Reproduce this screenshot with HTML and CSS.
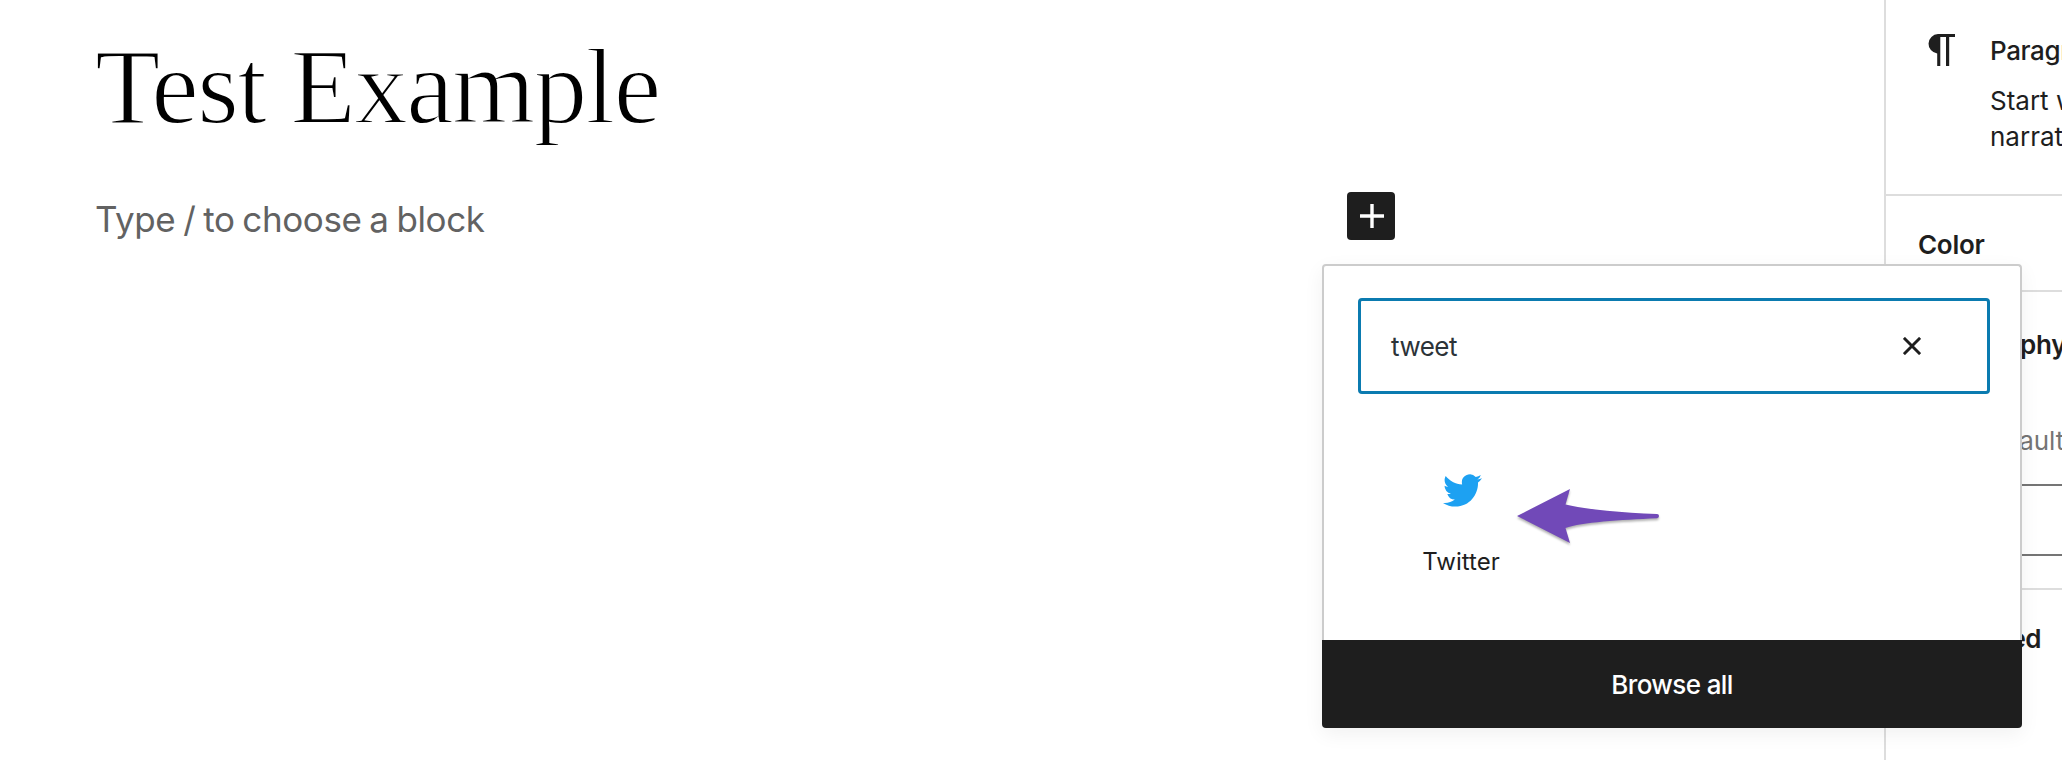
FILE: index.html
```html
<!DOCTYPE html>
<html lang="en">
<head>
<meta charset="utf-8">
<title>Test Example</title>
<link rel="stylesheet" href="styles.css">
</head>
<body>
<div class="app">
  <main class="editor">
    <h1 class="title">Test Example</h1>
    <p class="prompt">Type / to choose a block</p>
    <button class="add" aria-label="Add block"><svg width="24" height="24" viewBox="0 0 24 24"><path d="M0 12H24M12 0V24" stroke="#fff" stroke-width="3.4"/></svg></button>
  </main>
  <aside class="sidebar">
    <section class="card">
      <svg class="pilcrow" width="27" height="32" viewBox="0 0 27 32"><path d="M27 0H10A10 9.8 0 0 0 9.2 19.5V32H12.3V3H18V32H21.2V3H27Z" fill="#1e1e1e"/></svg>
      <div class="info">
        <h2 class="name">Paragraph</h2>
        <p class="desc">Start with the building block of all<br>narrative.</p>
      </div>
    </section>
    <section class="panel"><h3 class="heading">Color</h3></section>
    <section class="panel typography">
      <h3 class="heading">Typography</h3>
      <div class="size">Default</div>
      <div class="select"></div>
    </section>
    <section class="panel last"><h3 class="heading">Advanced</h3></section>
  </aside>
  <div class="popover">
    <div class="content">
      <div class="search">
        <span class="query">tweet</span>
        <svg width="18" height="18" viewBox="0 0 18 18"><path d="M.9 .9L17.1 17.1M17.1 .9L.9 17.1" stroke="#1e1e1e" stroke-width="2.9"/></svg>
      </div>
      <div class="results">
        <div class="item">
          <svg class="bird" width="39" height="33" viewBox="0 2 24 20" preserveAspectRatio="none"><path fill="#1da1f2" d="M23.953 4.57a10 10 0 01-2.825.775 4.958 4.958 0 002.163-2.723c-.951.555-2.005.959-3.127 1.184a4.92 4.92 0 00-8.384 4.482C7.69 8.095 4.067 6.13 1.64 3.162a4.822 4.822 0 00-.666 2.475c0 1.71.87 3.213 2.188 4.096a4.904 4.904 0 01-2.228-.616v.06a4.923 4.923 0 003.946 4.827 4.996 4.996 0 01-2.212.085 4.936 4.936 0 004.604 3.417 9.867 9.867 0 01-6.102 2.105c-.39 0-.779-.023-1.17-.067a13.995 13.995 0 007.557 2.209c9.053 0 13.998-7.496 13.998-13.985 0-.21 0-.42-.015-.63A9.935 9.935 0 0024 4.59z"/></svg>
          <span class="label">Twitter</span>
        </div>
        <svg class="arrow" width="142" height="54" viewBox="0 0 142 54"><path d="M0 27L53 0 48.5 15.5C72 21 105 23.5 140 25Q142 25 142 27Q142 29 140 29.2C103 31 65 33 48.500 39L53 54Z" fill="#7149b8"/></svg>
      </div>
    </div>
    <button class="browse">Browse all</button>
  </div>
</div>
</body>
</html>
```

FILE: styles.css
```css
* { box-sizing: border-box; }
body { margin: 0; background: #fff; color: #1e1e1e; font-family: Inter, sans-serif; font-size: 26px; }
h1, h2, h3, p { margin: 0; font-weight: 400; }
button { border: 0; padding: 0; font: inherit; }
svg { display: block; flex: none; }
.app { position: relative; display: flex; width: 2062px; height: 760px; overflow: hidden; }
.editor { position: relative; width: 1884px; flex: none; padding: 26px 0 0 95px; }
.title { font: 400 107px/122px "Liberation Serif", serif; letter-spacing: -1.6px; color: #000; -webkit-text-stroke: 1.9px #fff; }
.prompt { margin-top: 46px; font-size: 35px; line-height: 50px; letter-spacing: -.4px; word-spacing: -1.6px; color: #626262; }
.add { position: absolute; left: 1347px; top: 192px; width: 48px; height: 48px; display: grid; place-items: center; padding-left: 2px; background: #1e1e1e; border-radius: 4px; }
.sidebar { width: 178px; flex: none; border-left: 2px solid #ddd; overflow: hidden; white-space: nowrap; }
.card { display: flex; height: 196px; padding: 33px 0 0 42px; border-bottom: 2px solid #ddd; }
.pilcrow { margin-top: 1px; }
.info { margin-left: 35px; }
.name { font-size: 26px; font-weight: 550; line-height: 36px; letter-spacing: -.4px; }
.desc { margin-top: 14px; line-height: 36px; }
.panel { height: 96px; padding: 31px 0 0 32px; border-bottom: 2px solid #ddd; }
.heading { font-size: 26px; font-weight: 600; line-height: 36px; letter-spacing: -.3px; }
.typography { height: 298px; padding-top: 35px; }
.size { margin: 60px 0 25px 58px; line-height: 36px; color: #757575; }
.select { height: 72px; border: 2px solid #757575; border-right: 0; }
.last { border: 0; }
.last .heading { letter-spacing: -.6px; }
.popover { position: absolute; left: 1322px; top: 264px; width: 700px; height: 464px; display: flex; flex-direction: column; border-radius: 4px; box-shadow: 0 6px 20px rgba(0,0,0,.06); }
.content { flex: 1; padding: 32px 30px 0 34px; background: #fff; border: 2px solid #ccc; border-bottom: 0; border-radius: 4px 4px 0 0; }
.search { display: flex; align-items: center; justify-content: space-between; height: 96px; padding: 0 66px 0 30px; border: 3px solid #0b7bb0; border-radius: 4px; color: #2c3338; }
.query { padding-top: 1px; letter-spacing: -.5px; }
.results { display: flex; }
.item { width: 206px; padding-top: 80px; display: flex; flex-direction: column; align-items: center; }
.bird { margin-left: 2px; }
.label { margin-top: 38px; font-size: 24px; line-height: 34px; }
.arrow { margin: 95px 0 0 -47px; overflow: visible; filter: drop-shadow(0 2px 1px rgba(0,0,0,.3)); }
.browse { height: 88px; padding-top: 1px; line-height: 87px; font-weight: 500; letter-spacing: -.6px; background: #1e1e1e; color: #fff; border-radius: 0 0 4px 4px; }
```
